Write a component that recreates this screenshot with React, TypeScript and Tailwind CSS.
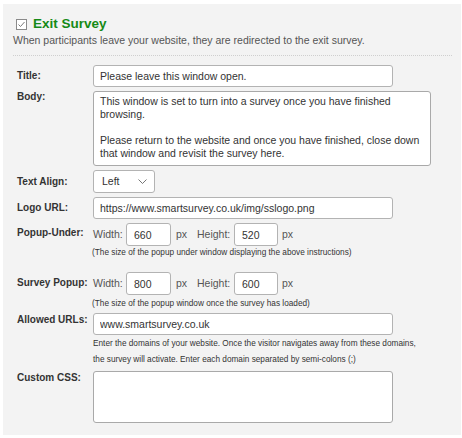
import React from "react";

const font = { fontFamily: '"Liberation Sans", Arial, sans-serif' };

function Label({ children, className = "" }: { children: React.ReactNode; className?: string }) {
  return (
    <div className={`w-[76px] shrink-0 text-[10px] font-bold text-[#333] leading-[12px] ${className}`}>
      {children}
    </div>
  );
}

function TextBox({ value, w = "w-[300px]" }: { value: string; w?: string }) {
  return (
    <input
      readOnly
      defaultValue={value}
      className={`${w} h-[22px] bg-white border border-[#b3b3b3] rounded-[3px] pl-[6px] text-[10.5px] text-[#333] outline-none`}
      style={font}
    />
  );
}

function SizeRow({ w, h }: { w: string; h: string }) {
  return (
    <div className="flex items-center text-[10.5px] text-[#555]">
      <span className="w-[33px]">Width:</span>
      <input
        readOnly
        defaultValue={w}
        className="w-[45px] h-[23px] bg-white border border-[#b3b3b3] rounded-[3px] pl-[7px] text-[10.5px] text-[#333] outline-none"
        style={font}
      />
      <span className="ml-[5px] w-[21px]">px</span>
      <span className="w-[37px]">Height:</span>
      <input
        readOnly
        defaultValue={h}
        className="w-[44px] h-[23px] bg-white border border-[#b3b3b3] rounded-[3px] pl-[7px] text-[10.5px] text-[#333] outline-none"
        style={font}
      />
      <span className="ml-[4px]">px</span>
    </div>
  );
}

export default function App() {
  return (
    <div className="w-[462px] h-[438px] bg-white pt-[4px] pl-[3px] pr-[1px]" style={font}>
      <div className="h-[431px] bg-[#f3f3f3] pt-[11px] pl-[10px] pr-[9px]">
        {/* Header */}
        <div className="flex items-center h-[18px] pl-[3px]">
          <svg width="11" height="11" viewBox="0 0 11 11" className="mr-[6px]">
            <rect x="0.5" y="0.5" width="10" height="10" fill="white" stroke="#8a8a8a" />
            <path d="M2.5 5.5 L4.5 7.5 L8.5 3" fill="none" stroke="#7a7a7a" strokeWidth="1" />
          </svg>
          <span className="text-[13.5px] font-bold text-[#168a16]">Exit Survey</span>
        </div>
        <div className="text-[10.5px] leading-[14px] text-[#555]">
          When participants leave your website, they are redirected to the exit survey.
        </div>
        <div className="mt-[8px] border-t border-dotted border-[#cfcfcf]" />

        {/* Form */}
        <div className="pl-[4px] pt-[9px] flex flex-col">
          <div className="flex items-center">
            <Label>Title:</Label>
            <TextBox value="Please leave this window open." />
          </div>

          <div className="flex mt-[4px]">
            <Label>Body:</Label>
            <div className="w-[338px] h-[75px] bg-white border border-[#a9a9a9] rounded-[3px] px-[6px] pt-[3px] text-[10.5px] leading-[13px] text-[#333]">
              This window is set to turn into a survey once you have finished
              <br />
              browsing.
              <br />
              <br />
              Please return to the website and once you have finished, close down
              <br />
              that window and revisit the survey here.
            </div>
          </div>

          <div className="flex items-center mt-[4px]">
            <Label>Text Align:</Label>
            <div className="w-[62px] h-[23px] bg-white border border-[#b3b3b3] rounded-[3px] flex items-center pl-[8px] text-[10.5px] text-[#333]">
              <span className="w-[36px]">Left</span>
              <svg width="9" height="5" viewBox="0 0 9 5">
                <path d="M0.5 0.5 L4.5 4.5 L8.5 0.5" fill="none" stroke="#666" strokeWidth="0.9" />
              </svg>
            </div>
          </div>

          <div className="flex items-center mt-[4px]">
            <Label>Logo URL:</Label>
            <TextBox value="https://www.smartsurvey.co.uk/img/sslogo.png" />
          </div>

          <div className="flex items-center mt-[4px]">
            <Label className="-mt-[3px]">Popup-Under:</Label>
            <SizeRow w="660" h="520" />
          </div>
          <div className="pl-[75px] text-[8.25px] leading-[12px] text-[#333] mt-[1px]">
            (The size of the popup under window displaying the above instructions)
          </div>

          <div className="flex items-center mt-[13px]">
            <Label className="-mt-[1px]">Survey Popup:</Label>
            <SizeRow w="800" h="600" />
          </div>
          <div className="pl-[75px] text-[8.25px] leading-[12px] text-[#333] mt-[3px]">
            (The size of the popup window once the survey has loaded)
          </div>

          <div className="flex mt-[3px]">
            <Label className="pt-[1px]">Allowed URLs:</Label>
            <TextBox value="www.smartsurvey.co.uk" />
          </div>
          <div className="pl-[76px] text-[8.25px] leading-[16px] text-[#333] mt-[1px]">
            Enter the domains of your website. Once the visitor navigates away from these domains,
            <br />
            the survey will activate. Enter each domain separated by semi-colons (;)
          </div>

          <div className="flex mt-[3px]">
            <Label className="pt-[1px]">Custom CSS:</Label>
            <div className="w-[300px] h-[52px] bg-white border border-[#a9a9a9] rounded-[3px]" />
          </div>
        </div>
      </div>
    </div>
  );
}
